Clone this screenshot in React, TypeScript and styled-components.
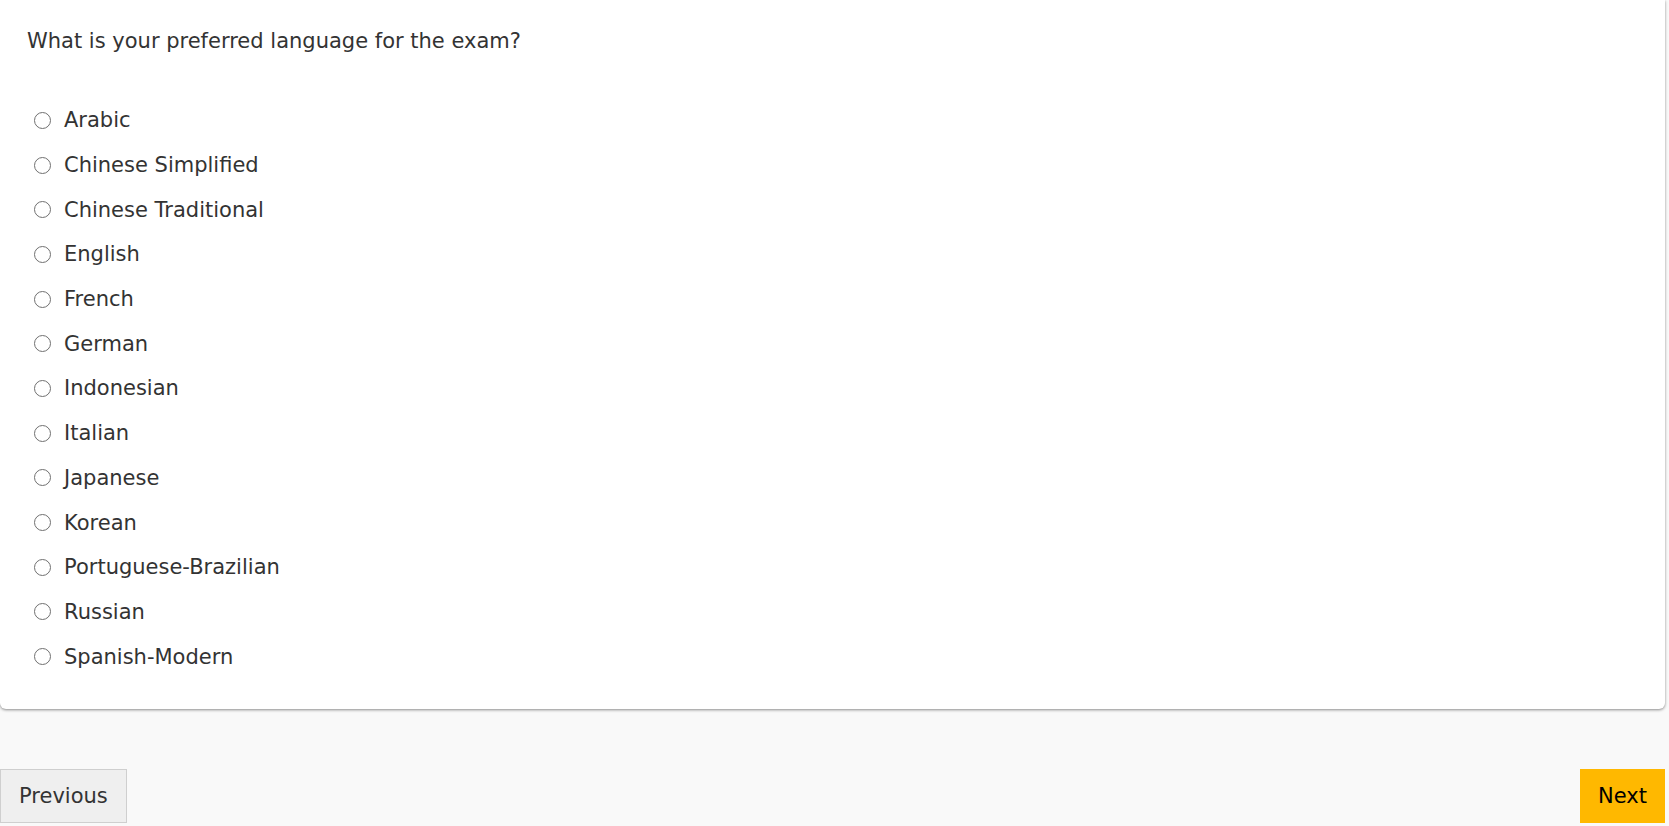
import React from "react";
import styled, { createGlobalStyle } from "styled-components";

const Global = createGlobalStyle`
  html, body { margin: 0; padding: 0; background: #f9f9f9; }
  body { font-family: "DejaVu Sans", sans-serif; color: #333; }
`;

const Page = styled.div`
  width: 1665px;
  display: flex;
  flex-direction: column;
`;

const Card = styled.section`
  background: #fff;
  border-radius: 0 0 6px 6px;
  box-shadow: 0 1px 3px rgba(0, 0, 0, 0.45);
  padding: 29px 27px 30px;
`;

const Question = styled.p`
  margin: 0 0 45px;
  font-size: 21px;
  line-height: 24px;
  color: #333;
`;

const Options = styled.div`
  display: flex;
  flex-direction: column;
  padding-left: 7px;
`;

const Row = styled.label`
  height: 44.7px;
  display: flex;
  align-items: center;
  gap: 13px;
  font-size: 21px;
  color: #333;
`;

const Radio = styled.input.attrs({ type: "radio" })`
  -webkit-appearance: none;
  appearance: none;
  margin: 0;
  width: 17px;
  min-width: 17px;
  height: 17px;
  border: 1.5px solid #707070;
  border-radius: 50%;
  background: #fff;
  box-sizing: border-box;
  flex: none;
`;

const Footer = styled.div`
  margin-top: 60px;
  display: flex;
  justify-content: space-between;
`;

const Button = styled.button<{ $primary?: boolean }>`
  height: 54px;
  padding: 0 ${(p) => (p.$primary ? "17px" : "18px")};
  font-family: inherit;
  font-size: 21px;
  color: ${(p) => (p.$primary ? "#000" : "#333")};
  background: ${(p) => (p.$primary ? "#ffb800" : "#efefef")};
  border: 1px solid ${(p) => (p.$primary ? "#ffb800" : "#cfcfcf")};
  cursor: pointer;
`;

const languages = [
  "Arabic",
  "Chinese Simplified",
  "Chinese Traditional",
  "English",
  "French",
  "German",
  "Indonesian",
  "Italian",
  "Japanese",
  "Korean",
  "Portuguese-Brazilian",
  "Russian",
  "Spanish-Modern",
];

export default function App() {
  return (
    <>
      <Global />
      <Page>
        <Card>
          <Question>What is your preferred language for the exam?</Question>
          <Options>
            {languages.map((l) => (
              <Row key={l}>
                <Radio name="lang" value={l} />
                {l}
              </Row>
            ))}
          </Options>
        </Card>
        <Footer>
          <Button>Previous</Button>
          <Button $primary>Next</Button>
        </Footer>
      </Page>
    </>
  );
}
